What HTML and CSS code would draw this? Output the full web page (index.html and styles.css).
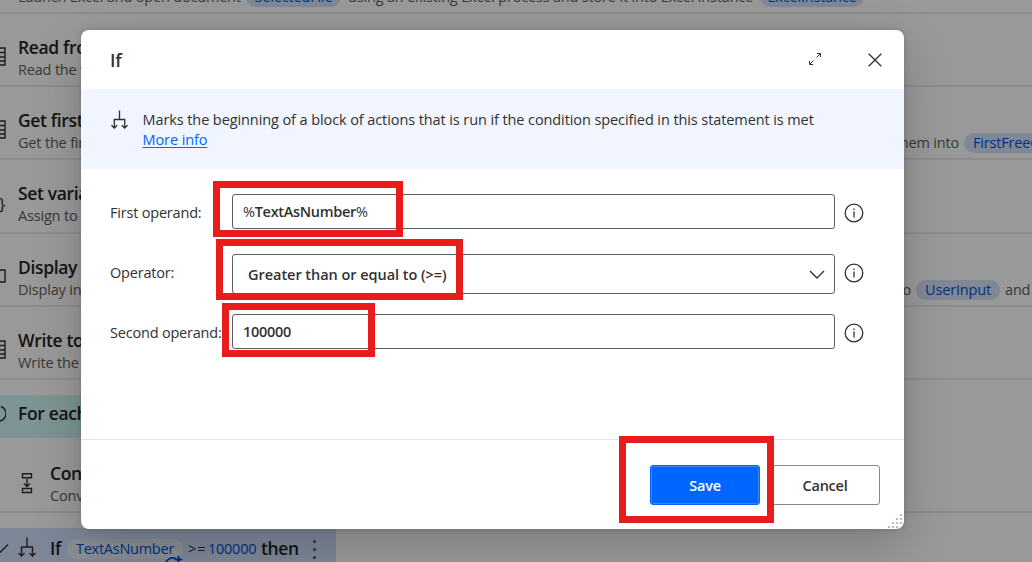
FILE: index.html
```html
<!DOCTYPE html>
<html lang="en">
<head>
<meta charset="utf-8">
<title>If</title>
<link rel="stylesheet" href="styles.css">
</head>
<body>
<svg class="defs" aria-hidden="true">
  <symbol id="branch" viewBox="0 0 18 21"><path d="M9 .5V10M3.500 19V10h11v9M.5 16l3 3 3-3M11.500 16l3 3 3-3"/></symbol>
  <symbol id="table" viewBox="0 0 18 19"><path d="M1 1h16v17H1zM1 5.500h16M1 10h16M1 14h16M11 5.500V18"/></symbol>
  <symbol id="info" viewBox="0 0 20 20"><circle cx="10" cy="10" r="8.800"/><path d="M10 8.500v6M10 5.600v1.500"/></symbol>
</svg>
<main class="flow">
  <section class="row first"><div class="copy"><p class="sub launch"><span class="launch-a">Launch Excel and open document</span><b class="chip chip-file">SelectedFile</b><span class="launch-b">using an existing Excel process and store it into Excel instance</span><b class="chip chip-excel">ExcelInstance</b></p></div></section>
  <section class="row"><svg class="edge"><use href="#table"/></svg><div class="copy"><h2>Read from</h2><p class="sub">Read the v</p></div></section>
  <section class="row"><svg class="edge"><use href="#table"/></svg><div class="copy"><h2>Get first</h2><p class="sub"><span class="lead">Get the first</span><span class="hem">them into</span><b class="chip chip-free">FirstFreeColumn</b></p></div></section>
  <section class="row"><span class="brace">}</span><div class="copy"><h2>Set variable</h2><p class="sub">Assign to</p></div></section>
  <section class="row"><svg class="edge" viewBox="0 0 18 19"><path d="M1 3h16v12H1z"/></svg><div class="copy"><h2>Display</h2><p class="sub"><span class="lead">Display inp</span><span class="too">to</span><b class="chip chip-user">UserInput</b><span>and</span></p></div></section>
  <section class="row"><svg class="edge"><use href="#table"/></svg><div class="copy"><h2>Write to</h2><p class="sub">Write the</p></div></section>
  <section class="loop"><svg class="edge" viewBox="0 0 18 19"><path d="M13 2.500a7.500 7.500 0 1 1-5 0"/></svg><h2>For each</h2></section>
  <section class="convert"><svg viewBox="0 0 12 22"><path d="M1.500 1.700h9v4h-9zM1.500 16.500h9v4h-9zM6 7v7M3 11.500l3 3 3-3"/></svg><div><h2>Conv</h2><p class="sub">Conve</p></div></section>
  <section class="selected">
    <svg class="tick" viewBox="0 0 12 12"><path d="M0 6.500l3.500 3.500L11 2.500"/></svg>
    <svg class="fork"><use href="#branch"/></svg>
    <h2>If</h2><b class="chip chip-number">TextAsNumber</b><span class="op">&gt;=</span><span class="num">100000</span><h2 class="then">then</h2><i class="dots"></i>
    <svg class="spark" viewBox="0 0 20 18"><path d="M12 3.500C7 1.500 1.500 4.500 1.500 10s6 9 12 5"/><path class="star" d="M14.500 0l1.200 3.300 3.300 1.200-3.300 1.200-1.200 3.300-1.200-3.300L10 4.500l3.300-1.200z"/></svg>
  </section>
</main>
<div class="shade"></div>
<div class="dialog">
  <header><h1>If</h1>
    <svg class="expand" viewBox="0 0 14 14"><path d="M8.500 5.500L12 2M5.500 8.500L2 12M9 1.500h3.500V5M1.500 9v3.500H5"/></svg>
    <svg class="close" viewBox="0 0 14 14"><path d="M.7.7l12.600 12.600M13.300.7L.7 13.300"/></svg>
  </header>
  <div class="about"><svg class="fork"><use href="#branch"/></svg><div><p>Marks the beginning of a block of actions that is run if the condition specified in this statement is met</p><a>More info</a></div></div>
  <div class="form">
    <div class="field"><label>First operand:</label><div class="box"><span class="v1"><span class="pct">%</span>TextAsNumber<span class="pct">%</span></span></div><svg class="info"><use href="#info"/></svg><i class="mark m1"></i></div>
    <div class="field"><label>Operator:</label><div class="box select"><span class="v2">Greater than or equal to (&gt;=)</span><svg class="chev" viewBox="0 0 16 9"><path d="M1 1l7 7 7-7"/></svg></div><svg class="info"><use href="#info"/></svg><i class="mark m2"></i></div>
    <div class="field"><label>Second operand:</label><div class="box"><span class="v3">100000</span></div><svg class="info"><use href="#info"/></svg><i class="mark m3"></i></div>
  </div>
  <footer><button class="save">Save</button><button>Cancel</button><i class="mark m4"></i>
    <svg class="grip" viewBox="0 0 15 15"><path d="M12 1h2M8 5h2M12 5h2M4 9h2M8 9h2M12 9h2M0 13h2M4 13h2M8 13h2"/></svg>
  </footer>
</div>
</body>
</html>
```
FILE: styles.css
```css
* { box-sizing: border-box; }
body { margin: 0; width: 1032px; height: 562px; overflow: hidden; position: relative; background: #fff; color: #323130; font: 14.5px/20px "Open Sans", "Noto Sans", sans-serif; letter-spacing: -.18px; }
h1, h2, p { margin: 0; }
svg { fill: none; stroke: #323130; stroke-width: 1.4; flex: none; }
.defs { display: none; }
.flow { height: 562px; overflow: hidden; display: flex; flex-direction: column; }
.row { height: 73.2px; flex: none; display: flex; border-bottom: 2px solid #ebebeb; white-space: nowrap; }
.row.first { height: 14px; align-items: flex-end; }
.row.first .copy { padding: 0 0 5px; margin-left: 18px; }
.edge { width: 18px; height: 19px; margin: 33px 0 0 -12px; }
.brace { width: 6px; margin: 34px 0 0; font-size: 17px; line-height: 20px; text-indent: -1px; }
.copy { padding-top: 21px; margin-left: 12px; }
h2 { font-size: 17.5px; line-height: 25px; font-weight: 600; letter-spacing: -.35px; color: #252423; }
.sub { display: flex; height: 20px; align-items: center; color: #605e5c; white-space: nowrap; }
.chip { font-weight: 400; height: 20px; line-height: 20px; border-radius: 10px; background: #d6e3f8; color: #0052d9; text-align: center; flex: none; }
.launch-a { width: 228px; }
.chip-file { width: 95px; }
.launch-b { width: 412px; margin-left: 7px; }
.chip-excel { width: 104px; }
.lead { width: 870px; flex: none; }
.hem { width: 76px; flex: none; text-align: right; padding-right: 5px; }
.chip-free { width: 127px; }
.too { width: 23px; text-align: right; flex: none; }
.chip-user { width: 84px; margin: 0 5px; }
.loop { width: 336px; height: 43px; margin-top: 15px; flex: none; display: flex; align-items: center; background: #cff7f6; }
.loop .edge { margin-top: -5px; }
.loop h2 { margin: -5px 0 0 12px; }
.convert { height: 75px; flex: none; display: flex; border-bottom: 2px solid #ebebeb; }
.convert svg { width: 12px; height: 22px; margin: 34px 17px 0 21px; }
.convert > div { padding-top: 23px; }
.selected { width: 336px; height: 41px; margin-top: 15px; flex: none; display: flex; position: relative; align-items: center; background: #d0e1fc; }
.tick { width: 12px; height: 12px; margin-left: -3px; }
.fork { width: 18px; height: 21px; }
.selected .fork { margin: -2px 14px 0 9px; }
.chip-number { width: 116px; background: #e6edf8; margin-left: 5px; }
.op { margin-left: 5px; width: 20px; }
.num { color: #0052d9; width: 49px; }
.chip-number, .num { letter-spacing: -.25px; }
.op { letter-spacing: 1px; }
.chip-number, .op, .num { position: relative; top: 1px; }
.selected h2 { width: 12px; }
.selected .then { width: 39px; margin-left: 4px; }
.dots { width: 3px; height: 3px; border-radius: 2px; background: #555; box-shadow: 0 -8px #555, 0 8px #555; margin: 2px 0 0 13px; }
.spark { position: absolute; left: 164px; top: 27px; width: 20px; height: 18px; stroke: #0052d9; stroke-width: 1.800; }
.star { fill: #0052d9; stroke-width: .2; }
.shade { position: absolute; inset: 0; background: rgba(0,0,0,.4); }
.dialog { position: absolute; left: 81px; top: 30px; width: 823px; height: 499px; display: flex; flex-direction: column; background: #fff; border-radius: 8px; box-shadow: 0 16px 50px rgba(0,0,0,.2), 0 0 6px rgba(0,0,0,.15); }
header { height: 59px; display: flex; align-items: center; padding: 0 22px 0 29px; }
h1 { font-size: 18px; line-height: 24px; font-weight: 600; flex: 1; }
.expand { width: 14px; height: 14px; margin: -2px 46px 0 0; stroke-width: 1; }
.close { width: 14px; height: 14px; stroke-width: 1.300; }
.about { height: 80px; display: flex; padding: 21px 0 0 30px; background: #f0f5ff; white-space: nowrap; letter-spacing: -.093px; }
.about .fork { width: 17px; height: 20px; margin-right: 14.500px; }
.about a { color: #0066ff; text-decoration: underline; text-underline-offset: 2px; }
.form { height: 270px; padding: 25px 0 0 29px; display: flex; flex-direction: column; gap: 20px; }
.field { height: 40px; position: relative; display: flex; align-items: flex-start; }
.field label { width: 122px; padding-top: 9px; white-space: nowrap; flex: none; letter-spacing: -.2px; }
.box { width: 603px; height: 35px; border: 1px solid #605e5c; border-radius: 3px; padding: 7px 10px 0; font-weight: 600; }
.v1, .v3 { letter-spacing: -.3px; }
.v2 { letter-spacing: -.04px; }
.pct { font-weight: 400; }
.select { height: 40px; padding: 10px 9px 0 15px; display: flex; justify-content: space-between; }
.chev { width: 16px; height: 9px; margin-top: 5px; }
.info { width: 20px; height: 20px; margin: 9px 0 0 9px; stroke-width: 1.300; }
.mark { position: absolute; border: 7.500px solid #e81c1c; }
.m1 { left: 103px; top: -13px; width: 190px; height: 56px; }
.m2 { left: 106px; top: -15px; width: 247px; height: 61px; }
.m3 { left: 112px; top: -11px; width: 153px; height: 54px; }
.m4 { left: 538px; top: -4px; width: 155px; height: 87px; }
footer { height: 90px; border-top: 1px solid #e6e6e6; display: flex; justify-content: flex-end; gap: 10px; padding: 25px 24px 0; position: relative; }
button { width: 110px; height: 40px; padding: 2px 0 0; font: 600 14.500px/20px "Open Sans", sans-serif; letter-spacing: -.25px; color: #323130; background: #fff; border: 1px solid #8a8886; border-radius: 3px; }
.save { background: #0066ff; color: #fff; border-color: #0066ff; box-shadow: inset 0 0 0 1px #3b87ff; }
.grip { position: absolute; right: 1px; bottom: 0; width: 15px; height: 15px; stroke: #b4b9cc; stroke-width: 2; }
```
